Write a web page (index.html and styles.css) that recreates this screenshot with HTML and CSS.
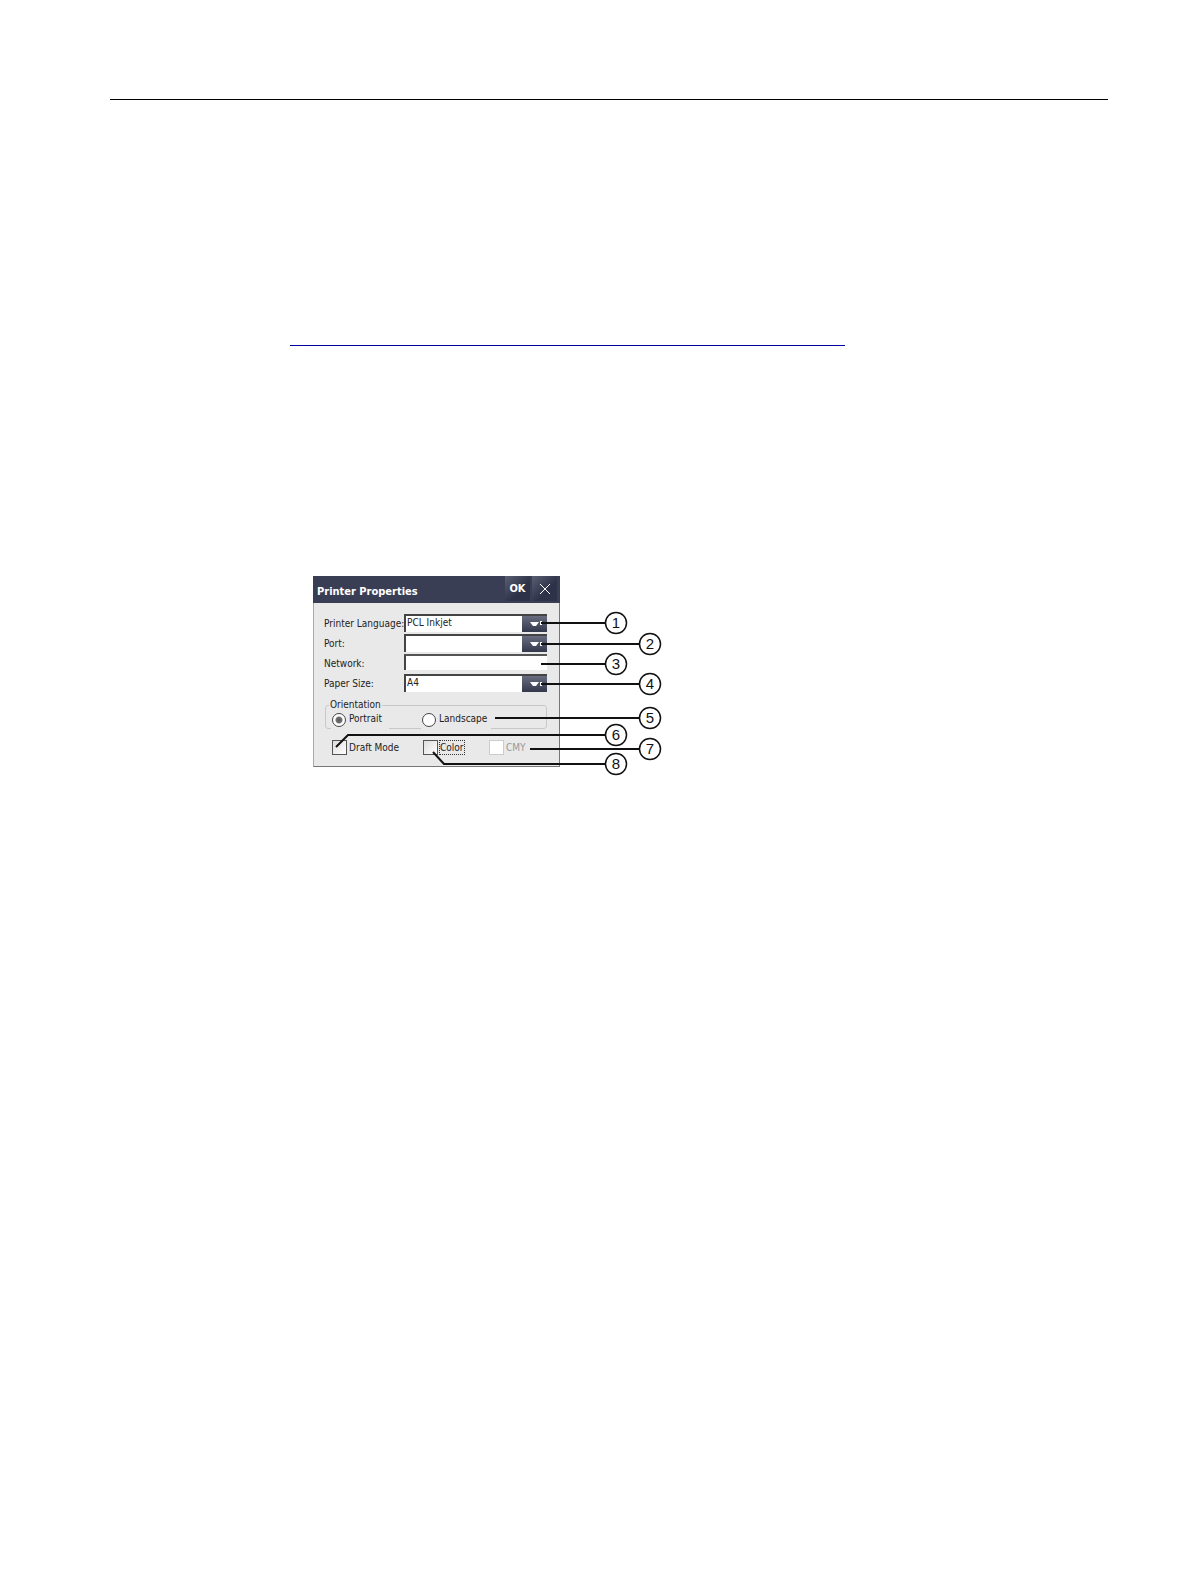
FILE: index.html
```html
<!DOCTYPE html>
<html lang="en">
  <head>
    <meta charset="UTF-8" />
    <meta name="viewport" content="width=device-width, initial-scale=1.0" />
    <title>Printer Properties</title>
    <link rel="stylesheet" href="styles.css">
  </head>
  <body>
    <header class="page-header"></header>

    <main class="content">
      <a class="doc-link" href="#printer" aria-label="Printer list"></a>

      <div class="figure" id="printer">
        <form class="dialog">
          <div class="titlebar">
            <h1>Printer Properties</h1>
            <button type="button" class="title-btn">OK</button>
            <button type="button" class="title-btn" aria-label="Close">
              <svg width="12" height="12" viewBox="0 0 12 12"><path d="M1 1 L11 11 M11 1 L1 11" /></svg>
            </button>
          </div>

          <div class="dialog-body">
            <div class="fields">
              <label for="language">Printer Language:</label>
              <div class="select-box">
                <select id="language"><option>PCL Inkjet</option></select>
                <span class="arrow"><svg width="10" height="6" viewBox="0 0 10 6"><path d="M0 1 H9 L6 5 H3 Z" /></svg></span>
              </div>
              <label for="port">Port:</label>
              <div class="select-box">
                <select id="port"><option></option></select>
                <span class="arrow"><svg width="10" height="6" viewBox="0 0 10 6"><path d="M0 1 H9 L6 5 H3 Z" /></svg></span>
              </div>
              <label for="network">Network:</label>
              <input type="text" class="text-box" id="network" />
              <label for="paper">Paper Size:</label>
              <div class="select-box">
                <select id="paper"><option>A4</option></select>
                <span class="arrow"><svg width="10" height="6" viewBox="0 0 10 6"><path d="M0 1 H9 L6 5 H3 Z" /></svg></span>
              </div>
            </div>

            <fieldset class="orientation">
              <legend>Orientation</legend>
              <div class="radios">
                <label><input type="radio" name="orientation" checked />Portrait</label>
                <label><input type="radio" name="orientation" />Landscape</label>
              </div>
            </fieldset>

            <div class="checks">
              <label><input type="checkbox" /><span>Draft Mode</span></label>
              <label><input type="checkbox" /><span class="focused">Color</span></label>
              <label class="disabled"><input type="checkbox" disabled /><span>CMY</span></label>
            </div>
          </div>
        </form>

        <!-- numbered callouts over the dialog -->
        <svg class="callouts" width="350" height="202" viewBox="0 0 350 202">
          <g class="halo">
            <path d="M227 47 H229 M227 68 H229 M227 108 H229" />
          </g>
          <g class="lines">
            <path d="M228 47 H292" />
            <path d="M228 68 H326" />
            <path d="M228 88 H292" />
            <path d="M228 108 H326" />
            <path d="M182 142 H326" />
            <path d="M23 171 L35 159 H292" />
            <path d="M217 173 H326" />
            <path d="M120 176 L131 188 H292" />
          </g>
          <g class="circles">
            <circle cx="303" cy="47" r="10.5" />
            <circle cx="337" cy="68" r="10.5" />
            <circle cx="303" cy="88" r="10.5" />
            <circle cx="337" cy="108" r="10.5" />
            <circle cx="337" cy="142" r="10.5" />
            <circle cx="303" cy="159" r="10.5" />
            <circle cx="337" cy="173" r="10.5" />
            <circle cx="303" cy="188" r="10.5" />
          </g>
          <g class="numbers">
            <text x="303" y="52">1</text>
            <text x="337" y="73">2</text>
            <text x="303" y="93">3</text>
            <text x="337" y="113">4</text>
            <text x="337" y="147">5</text>
            <text x="303" y="164">6</text>
            <text x="337" y="178">7</text>
            <text x="303" y="193">8</text>
          </g>
        </svg>
      </div>
    </main>
  </body>
</html>
```

FILE: styles.css
```css
* {
  box-sizing: border-box;
}

body {
  margin: 0;
  padding: 0 82px 0 110px;
  background-color: #fff;
  font-family: "DejaVu Sans Condensed", "DejaVu Sans", sans-serif;
  font-size: 10px;
  color: #222;
}

.page-header {
  height: 100px;
  border-bottom: 1px solid #000;
}

.content {
  padding-left: 180px;
}

.doc-link {
  display: block;
  max-width: 555px;
  height: 246px;
  border-bottom: 1px solid #0000a0;
}

.figure {
  position: relative;
  width: 350px;
  margin: 230px 0 60px 23px;
}

.dialog {
  width: 247px;
  background-color: #e9e9e9;
  border: 1px solid #777;
  border-top: none;
  border-left-color: #aaa;
}

.titlebar {
  display: flex;
  align-items: flex-start;
  height: 27px;
  margin: 0 -1px;
  padding-right: 3px;
  background-color: #3a3e54;
}

.titlebar h1 {
  flex: 1;
  margin: 0;
  padding-left: 4px;
  font-size: 11px;
  line-height: 31px;
  color: #fff;
}

.title-btn {
  display: flex;
  align-items: center;
  justify-content: center;
  width: 25px;
  height: 25px;
  margin-left: 2px;
  padding: 0;
  border: none;
  background: linear-gradient(135deg, #5a5f74, #2e3248 60%);
  color: #fff;
  font: bold 11px "DejaVu Sans Condensed", sans-serif;
}

.title-btn svg {
  fill: none;
  stroke: #fff;
}

.dialog-body {
  padding: 11px 12px 11px 10px;
}

.fields {
  display: grid;
  grid-template-columns: 80px 1fr;
  grid-auto-rows: 18px;
  row-gap: 2px;
  line-height: 19px;
}

.fields label {
  white-space: nowrap;
}

.select-box {
  display: flex;
  border-top: 2px solid #444;
  border-left: 2px solid #444;
  background-color: #fff;
}

select,
.text-box {
  flex: 1;
  min-width: 0;
  margin: 0;
  padding: 0 0 3px 1px;
  border: none;
  border-radius: 0;
  outline: none;
  appearance: none;
  background-color: #fff;
  color: #222;
  font: 10px "DejaVu Sans Condensed", sans-serif;
}

.text-box {
  height: 16px;
  border-top: 2px solid #555;
  border-left: 2px solid #444;
}

.arrow {
  display: flex;
  align-items: center;
  justify-content: center;
  width: 25px;
  background: linear-gradient(#686c7e, #34384c);
}

.arrow svg {
  fill: #fff;
}

.orientation {
  min-width: 0;
  margin: 7px 0 0 1px;
  padding: 1px 0 0 5px;
  border: 1px solid #c8c8c8;
  border-radius: 3px;
}

.orientation legend {
  margin-left: -2px;
  padding: 0 1px;
  line-height: 12px;
}

.radios {
  display: flex;
  gap: 32px;
  margin-bottom: -1px;
}

/* the labels paint over the bottom edge of the group box */
.radios label {
  display: flex;
  align-items: flex-start;
  width: 58px;
  height: 17px;
  padding-left: 1px;
  background-color: #e9e9e9;
  line-height: 14px;
}

.radios label:last-child {
  width: 70px;
}

input[type="radio"] {
  flex: none;
  width: 14px;
  height: 14px;
  margin: 1px 3px 0 0;
  border: 1px solid #444;
  border-radius: 50%;
  appearance: none;
  background-color: #fff;
}

input[type="radio"]:checked {
  background: radial-gradient(circle, #555 0, #777 3px, #fff 4px);
}

.checks {
  display: grid;
  grid-template-columns: 91px 66px 1fr;
  margin: 11px 0 0 8px;
}

.checks label {
  display: flex;
  align-items: center;
  line-height: 13px;
  white-space: nowrap;
}

input[type="checkbox"] {
  flex: none;
  width: 15px;
  height: 15px;
  margin: 0 2px 0 0;
  border: 1px solid #555;
  appearance: none;
  background: linear-gradient(135deg, #ddd, #fff);
}

.checks .focused {
  outline: 1px dotted #333;
}

.checks .disabled {
  color: #999;
}

.disabled input[type="checkbox"] {
  border-color: #ccc;
  background: #fff;
}

.callouts {
  position: absolute;
  top: 0;
  left: 0;
  overflow: visible;
  pointer-events: none;
}

.halo {
  stroke: #fff;
  stroke-width: 4;
}

.lines {
  fill: none;
  stroke: #111;
  stroke-width: 2;
}

.circles {
  fill: #fff;
  stroke: #111;
  stroke-width: 1.5;
}

.numbers {
  fill: #111;
  font: 15px "Liberation Sans", Arial, sans-serif;
  text-anchor: middle;
}
```
